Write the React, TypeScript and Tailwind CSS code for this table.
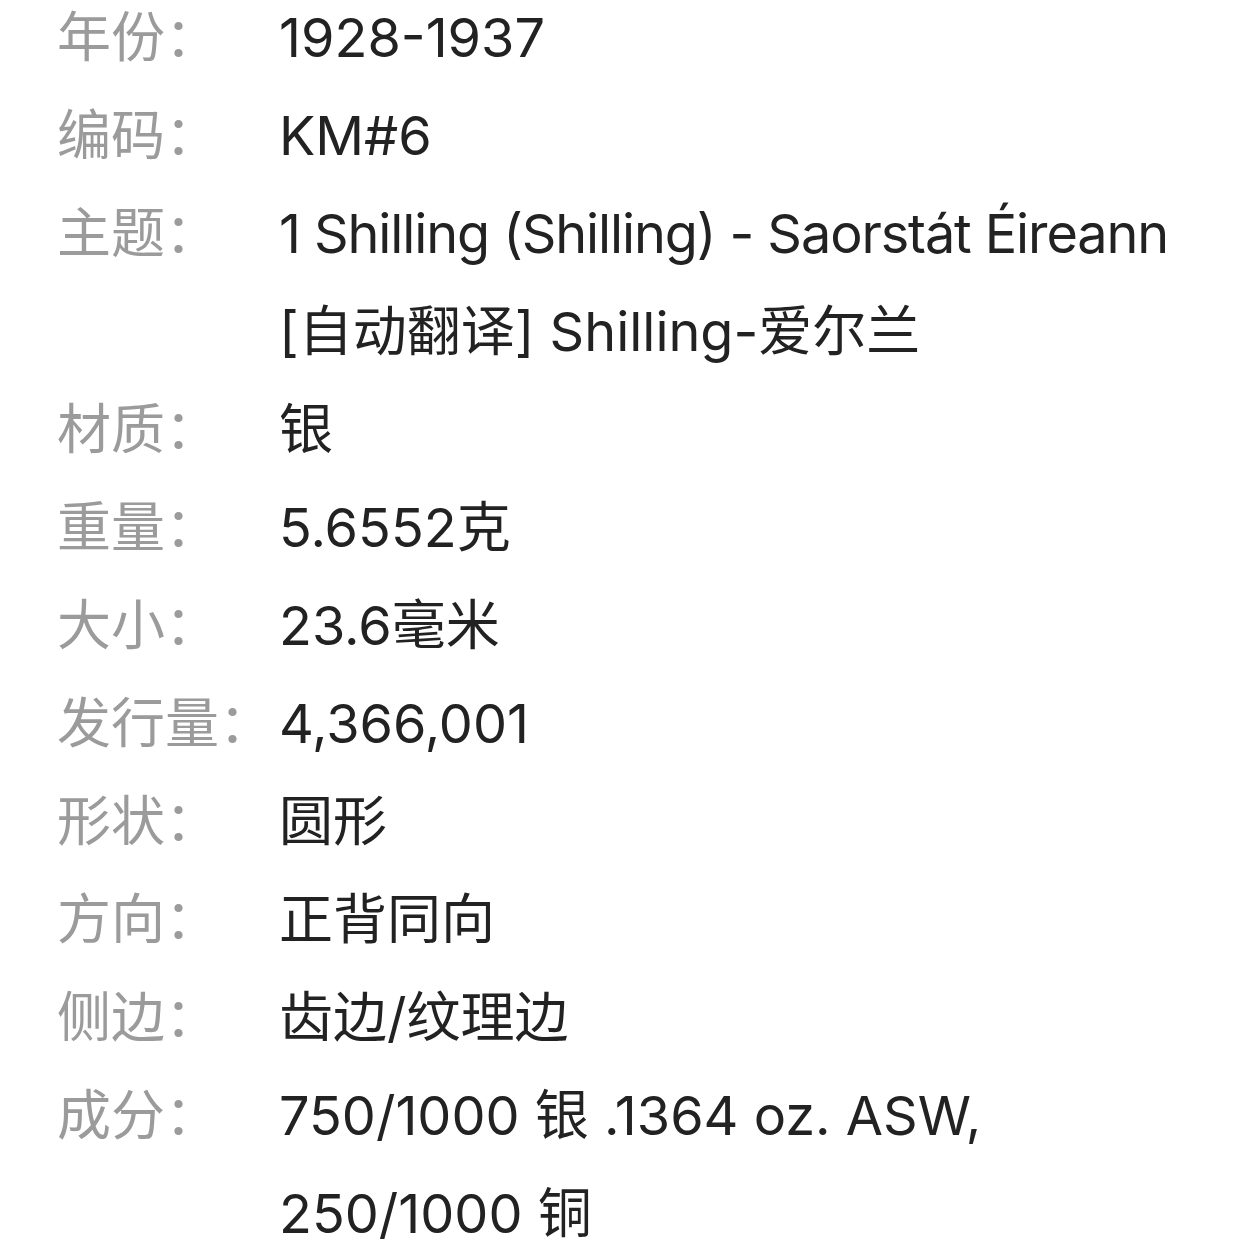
type Line = { text: string; tight?: boolean };

const rows: { label: string; lines: Line[] }[] = [
  { label: '年份：', lines: [{ text: '1928-1937' }] },
  { label: '编码：', lines: [{ text: 'KM#6' }] },
  {
    label: '主题：',
    lines: [{ text: '1 Shilling (Shilling) - Saorstát Éireann', tight: true }, { text: '[自动翻译] Shilling-爱尔兰' }],
  },
  { label: '材质：', lines: [{ text: '银' }] },
  { label: '重量：', lines: [{ text: '5.6552克' }] },
  { label: '大小：', lines: [{ text: '23.6毫米' }] },
  { label: '发行量：', lines: [{ text: '4,366,001' }] },
  { label: '形状：', lines: [{ text: '圆形' }] },
  { label: '方向：', lines: [{ text: '正背同向' }] },
  { label: '侧边：', lines: [{ text: '齿边/纹理边' }] },
  { label: '成分：', lines: [{ text: '750/1000 银 .1364 oz. ASW,' }, { text: '250/1000 铜' }] },
];

export default function App() {
  return (
    <div
      className="mt-[-11px] min-h-screen bg-white pl-[57px] text-[54px] leading-[98px]"
      style={{ fontFamily: 'Inter, "Noto Sans CJK SC", sans-serif' }}
    >
      {rows.map((row) => (
        <div key={row.label} className="flex">
          <div className="w-[224px] shrink-0 whitespace-nowrap text-[#9b9b9b]">{row.label}</div>
          <div className="-ml-[2px] text-[#222222]">
            {row.lines.map((line) => (
              <div
                key={line.text}
                className={line.tight ? 'whitespace-nowrap tracking-[-1.1px]' : 'whitespace-nowrap'}
              >
                {line.text}
              </div>
            ))}
          </div>
        </div>
      ))}
    </div>
  );
}
